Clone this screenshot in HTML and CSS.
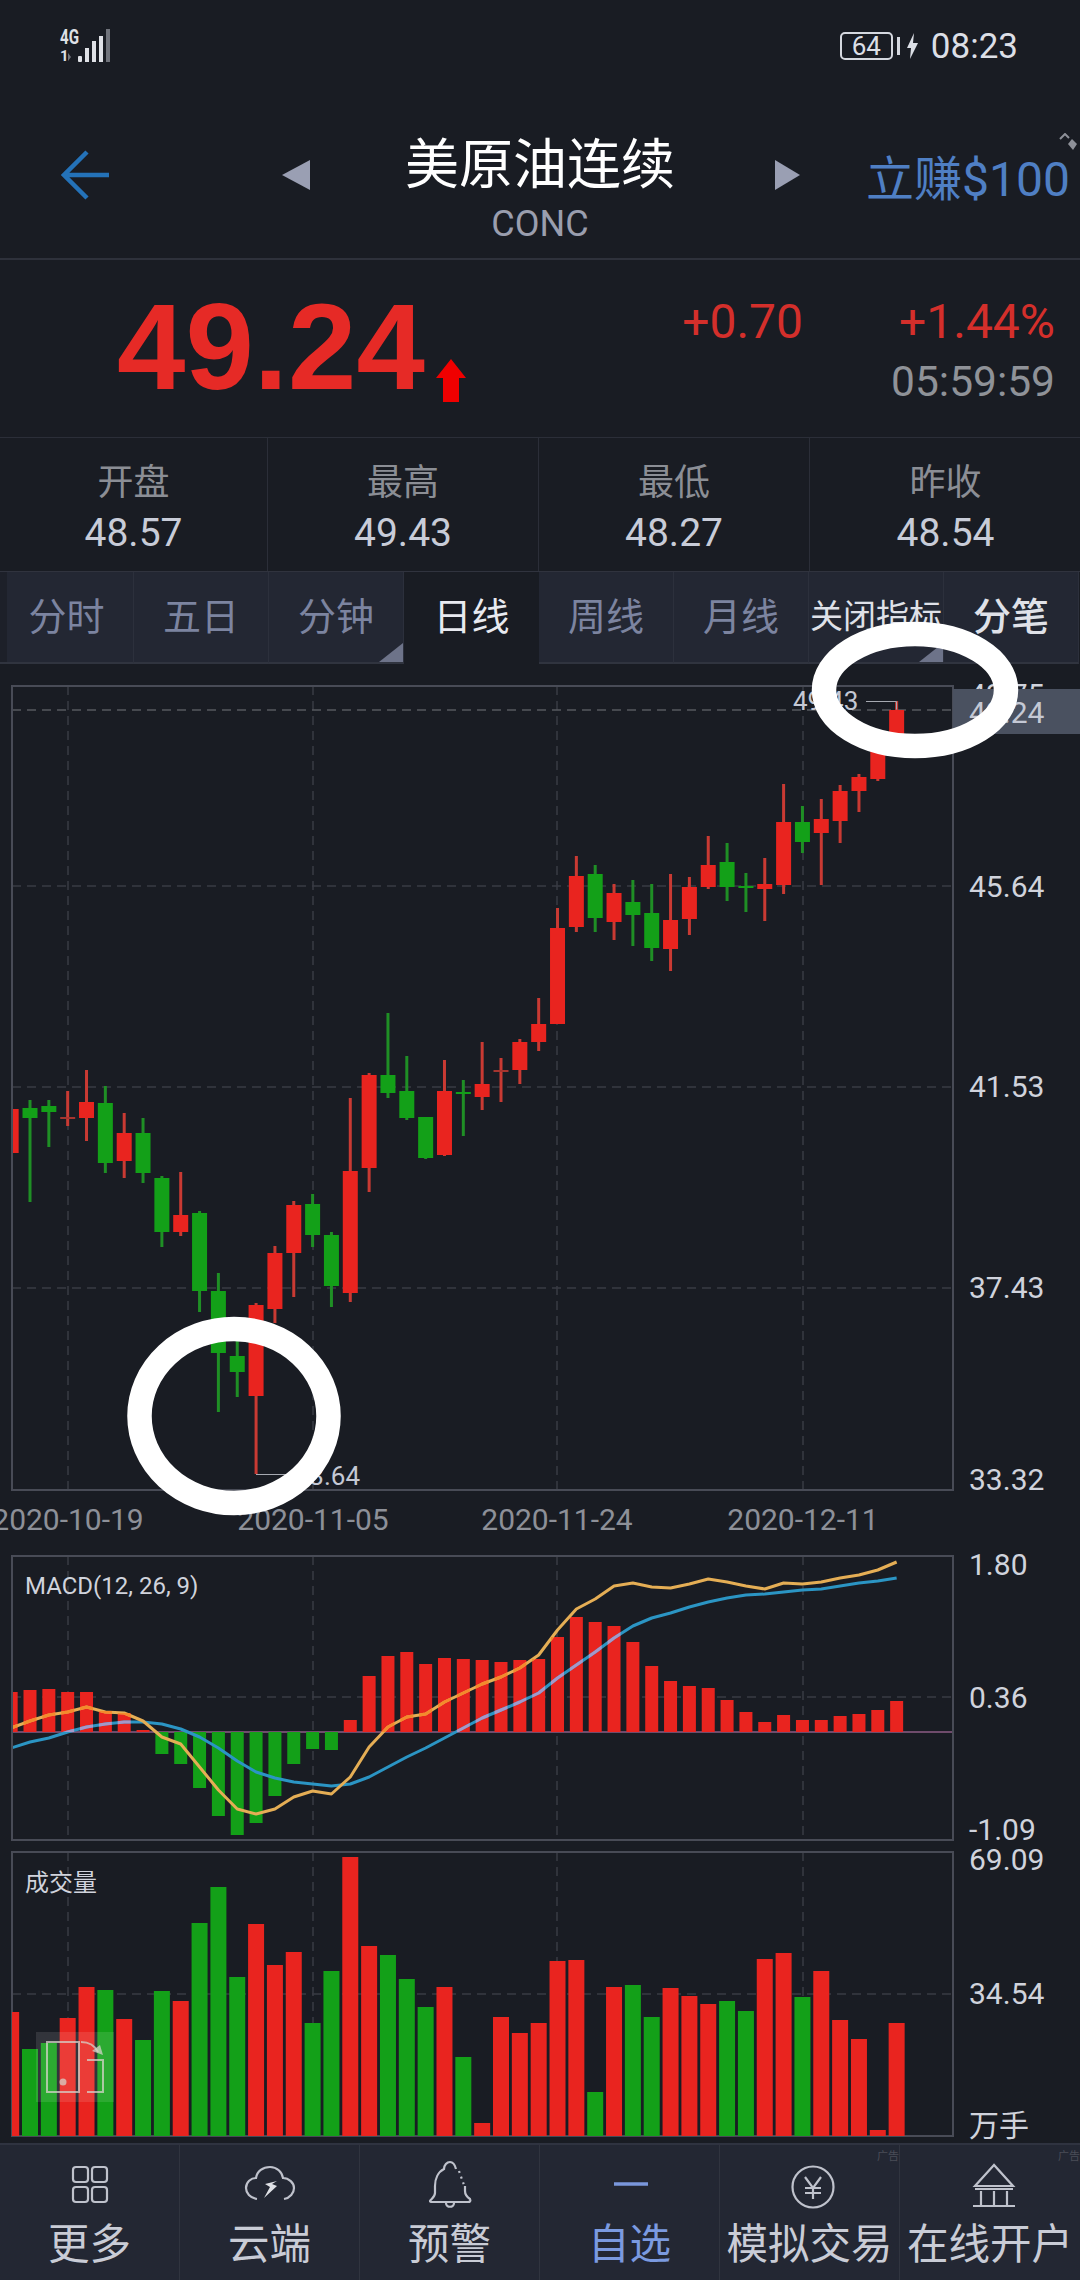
FILE: index.html
```html
<!DOCTYPE html>
<html lang="zh-CN">

<head>
    <meta charset="UTF-8">
    <meta name="viewport" content="width=device-width, initial-scale=1.0">
    <title>美原油连续</title>
    <link rel="stylesheet" href="styles.css">
</head>

<body>
    <div class="page">
        <div class="status-bar">
            <svg class="signal" width="52" height="46" viewBox="0 -6 52 46">
                <text class="signal-text" x="1" y="15" textLength="19" lengthAdjust="spacingAndGlyphs">4G</text>
                <text class="signal-small" x="1" y="32">1</text>
                <path class="signal-dim" d="M9 24l3 4-3 4z" />
                <rect class="signal-bar" x="19" y="27" width="4" height="6" rx="1" />
                <rect class="signal-bar" x="26" y="19" width="4" height="14" />
                <rect class="signal-bar" x="33" y="12" width="4" height="21" />
                <rect class="signal-bar" x="40" y="7" width="4" height="26" />
                <rect class="signal-dim" x="47" y="0" width="4" height="33" />
            </svg>
            <div class="status-right">
                <span class="battery">64</span>
                <span class="battery-nub"></span>
                <svg class="bolt" width="11" height="26" viewBox="0 0 11 26">
                    <path d="M7 0L0 15h4l-1 11 8-16H6z" />
                </svg>
                <span class="clock">08:23</span>
            </div>
        </div>

        <div class="nav">
            <svg class="back" width="48" height="50" viewBox="0 0 48 50">
                <path d="M48 25H5M26 2L3 25l23 23" />
            </svg>
            <svg class="tri" width="28" height="30" viewBox="0 0 28 30"><path d="M28 0v30L0 15z" /></svg>
            <div class="nav-title">
                <div class="title">美原油连续</div>
                <div class="code">CONC</div>
            </div>
            <svg class="tri tri-right" width="25" height="30" viewBox="0 0 25 30"><path d="M0 0v30l25-15z" /></svg>
            <div class="earn">立赚$100</div>
            <svg class="corner-mark" width="20" height="18" viewBox="0 0 20 18">
                <path class="corner-line" d="M1 6l5-5 4 4" />
                <path class="corner-fill" d="M13 6l5 5-4 6-5-6z" />
            </svg>
        </div>

        <div class="quote">
            <div class="price">49.24</div>
            <svg class="up-arrow" width="30" height="43" viewBox="0 0 30 43">
                <path d="M15 0l15 19H23v24H7V19H0z" />
            </svg>
            <div class="quote-side">
                <div class="change-row">
                    <span>+0.70</span>
                    <span>+1.44%</span>
                </div>
                <div class="quote-time">05:59:59</div>
            </div>
        </div>

        <div class="stats">
            <div class="stat">
                <div class="stat-label">开盘</div>
                <div class="stat-value">48.57</div>
            </div>
            <div class="stat">
                <div class="stat-label">最高</div>
                <div class="stat-value">49.43</div>
            </div>
            <div class="stat">
                <div class="stat-label">最低</div>
                <div class="stat-value">48.27</div>
            </div>
            <div class="stat">
                <div class="stat-label">昨收</div>
                <div class="stat-value">48.54</div>
            </div>
        </div>

        <div class="tabs">
            <div class="tab">分时</div>
            <div class="tab">五日</div>
            <div class="tab has-corner">分钟</div>
            <div class="tab active">日线</div>
            <div class="tab">周线</div>
            <div class="tab">月线</div>
            <div class="tab tab-small has-corner">关闭指标</div>
            <div class="tab tab-strong">分笔</div>
        </div>

        <svg id="chart" class="chart" width="1080" height="1483" viewBox="0 660 1080 1483"></svg>

        <div class="bottom-nav">
            <div class="nav-item">
                <svg class="nav-icon" width="60" height="50" viewBox="0 0 60 50">
                    <rect x="13" y="7" width="15" height="15" rx="3" />
                    <rect x="32" y="7" width="15" height="15" rx="3" />
                    <rect x="13" y="27" width="15" height="15" rx="3" />
                    <rect x="32" y="27" width="15" height="15" rx="3" />
                </svg>
                <div class="nav-label">更多</div>
            </div>
            <div class="nav-item">
                <svg class="nav-icon" width="60" height="50" viewBox="0 0 60 50">
                    <path d="M17 39C10 38 6 33 6 28c0-6 5-10 10-10 1-7 7-11 14-11s12 5 13 11c6 0 11 5 11 10 0 5-4 10-10 11" />
                    <path class="icon-fill" d="M37 21l-12 3 5 3-6 11 13-12-5-2z" />
                </svg>
                <div class="nav-label">云端</div>
            </div>
            <div class="nav-item">
                <svg class="nav-icon" width="60" height="50" viewBox="0 0 60 50">
                    <path d="M36 9c-1-4-3-7-6-7s-6 3-6 7c-6 3-9 10-9 17v7c0 4-4 6-5 8 0 1 1 1 2 1h36c2 0 3-1 2-3-3-2-5-4-5-8V26" />
                    <path d="M26 43c0 5 8 5 8 0" />
                    <path class="icon-dots" d="M39 11l5 14" />
                </svg>
                <div class="nav-label">预警</div>
            </div>
            <div class="nav-item nav-active">
                <svg class="nav-icon" width="60" height="50" viewBox="0 0 60 50">
                    <path class="minus" d="M14 24h34" />
                </svg>
                <div class="nav-label">自选</div>
            </div>
            <div class="nav-item">
                <svg class="nav-icon" width="60" height="50" viewBox="0 0 60 50">
                    <circle cx="33" cy="27" r="20.5" />
                    <path d="M25 17l8 11 8-11M33 28v11M25 28h16M25 33h16" />
                </svg>
                <div class="nav-label">模拟交易</div>
                <span class="ad-tag">广告</span>
            </div>
            <div class="nav-item">
                <svg class="nav-icon" width="60" height="50" viewBox="0 0 60 50">
                    <path d="M34 5L15 26h38zM15 29h38M21 31v14M34 31v14M47 31v14M13 46h42" />
                </svg>
                <div class="nav-label">在线开户</div>
                <span class="ad-tag">广告</span>
            </div>
        </div>

        <svg class="marks" width="1080" height="2280" viewBox="0 0 1080 2280">
            <ellipse cx="915" cy="690" rx="91" ry="56" />
            <ellipse cx="234" cy="1416" rx="94.5" ry="87" />
        </svg>

        <div class="float-btn">
            <svg width="78" height="70" viewBox="36 2032 78 70">
                <rect class="float-line" x="47" y="2042" width="32" height="50" />
                <circle class="float-dot" cx="63" cy="2082" r="3.5" />
                <path class="float-line" d="M81 2042c8 0 14 4 17 10M87 2060h16v32H87" />
                <path class="float-dot" d="M103 2055l-11-4 8-6z" />
            </svg>
        </div>
    </div>

    <script src="chart.js"></script>
</body>

</html>
```

FILE: styles.css
```css
* {
    box-sizing: border-box;
}

body {
    margin: 0;
    background-color: #191c23;
    font-family: Roboto, "Noto Sans CJK SC", sans-serif;
}

.page {
    position: relative;
    width: 1080px;
    height: 2280px;
    overflow: hidden;
    background-color: #191c23;
}

/* status bar */
.status-bar {
    display: flex;
    justify-content: space-between;
    align-items: center;
    height: 92px;
    padding: 0 62px 0 59px;
}

.signal-text {
    font-size: 21px;
    font-weight: 700;
    fill: #dfe1e6;
}

.signal-small {
    font-size: 15px;
    font-weight: 700;
    fill: #dfe1e6;
}

.signal-bar {
    fill: #dfe1e6;
}

.signal-dim {
    fill: #70737b;
}

.status-right {
    display: flex;
    align-items: center;
    color: #dcdfe6;
}

.battery {
    width: 53px;
    height: 28px;
    border: 2px solid #d5d8df;
    border-radius: 5px;
    font-size: 26px;
    line-height: 24px;
    text-align: center;
}

.battery-nub {
    width: 3px;
    height: 18px;
    margin-left: 4px;
    background-color: #d5d8df;
}

.bolt {
    margin-left: 7px;
    fill: #dcdfe6;
}

.clock {
    margin-left: 13px;
    font-size: 35px;
}

/* title row */
.nav {
    position: relative;
    display: grid;
    grid-template-columns: 282px 28px 460px 30px 280px;
    align-items: center;
    height: 168px;
    border-bottom: 2px solid #2e313b;
}

.back {
    margin-left: 61px;
    fill: none;
    stroke: #2472b8;
    stroke-width: 4.5;
}

.tri {
    fill: #9a9fb3;
}

.tri-right {
    margin-left: 5px;
}

.nav-title {
    align-self: start;
    padding-top: 44px;
    text-align: center;
}

.title {
    font-size: 54px;
    line-height: 60px;
    color: #fff;
}

.code {
    margin-top: 8px;
    font-size: 36px;
    line-height: 40px;
    color: #9a9eae;
}

.earn {
    margin-left: 66px;
    font-size: 48px;
    white-space: nowrap;
    color: #4f7fc4;
}

.corner-mark {
    position: absolute;
    top: 41px;
    right: 1px;
}

.corner-line {
    fill: none;
    stroke: #8d9098;
    stroke-width: 2;
}

.corner-fill {
    fill: #8d9098;
}

/* last price */
.quote {
    display: flex;
    height: 178px;
    padding-left: 117px;
    border-bottom: 1px solid #2b2e38;
}

.price {
    font-family: "Liberation Sans", Arial, sans-serif;
    font-size: 123px;
    font-weight: 700;
    line-height: 174px;
    color: #e62a26;
}

.up-arrow {
    align-self: flex-end;
    margin: 0 0 35px 11px;
    fill: #f00000;
}

.quote-side {
    display: flex;
    flex-direction: column;
    align-items: flex-end;
    row-gap: 6px;
    margin-left: auto;
    padding: 35px 25px 0 0;
}

.change-row {
    display: flex;
    column-gap: 96px;
    font-size: 48px;
    line-height: 54px;
    color: #d42f2b;
}

.quote-time {
    font-size: 42.5px;
    line-height: 54px;
    color: #8f9298;
}

/* open / high / low / close */
.stats {
    display: grid;
    grid-template-columns: 268px repeat(3, 271px);
    height: 133px;
}

.stat {
    padding-top: 20px;
    border-right: 1px solid #2b2e38;
    text-align: center;
}

.stat:last-child {
    border-right: 0;
}

.stat-label {
    font-size: 36px;
    line-height: 50px;
    color: #8b8e95;
}

.stat-value {
    font-size: 39px;
    line-height: 50px;
    color: #c8ccd8;
}

/* period tabs */
.tabs {
    display: grid;
    grid-template-columns: 134px repeat(7, 135px);
    height: 89px;
    border-top: 1px solid #30333e;
}

.tab {
    position: relative;
    border-right: 1px solid #2c303c;
    border-bottom: 2px solid #30343f;
    background-color: #232733;
    font-size: 38px;
    line-height: 90px;
    text-align: center;
    color: #7c84a0;
}

.tab:first-child {
    background: linear-gradient(90deg, #1d2029 7px, #232733 7px);
}

.tab.active {
    border: 0;
    background-color: #191c23;
    color: #e8eaf0;
}

.tab-small {
    font-size: 33px;
    color: #dfe1e8;
}

.tab-strong {
    font-weight: 500;
    color: #dfe1e8;
}

.has-corner::after {
    content: "";
    position: absolute;
    right: 0;
    bottom: 0;
    width: 24px;
    height: 19px;
    background-color: #6d7389;
    clip-path: polygon(100% 0, 100% 100%, 0 100%);
}

/* chart */
.chart {
    display: block;
}

.frame {
    fill: none;
    stroke: #484b56;
    stroke-width: 2;
}

.grid-line {
    stroke: #383b44;
    stroke-width: 1.5;
    stroke-dasharray: 9 6;
}

.grid-line.current {
    stroke: #55585f;
}

.zero-line {
    stroke: #6f4c6c;
    stroke-width: 2;
}

.up {
    fill: #e9241f;
}

.down {
    fill: #13a018;
}

.wick-up {
    fill: #c93a33;
}

.wick-down {
    fill: #1f8f25;
}

.doji-up {
    fill: #a5352f;
}

.macd-line {
    fill: none;
    stroke-width: 3;
    stroke-linejoin: round;
}

.line-dif {
    stroke: #e5ae55;
}

.line-dif-over {
    stroke: #f48a2c;
}

.line-dea {
    stroke: #2b95c4;
}

.line-dea-over {
    stroke: #a598c8;
}

.axis-label {
    font-size: 30px;
    fill: #d0d3dc;
}

.date-label {
    font-size: 30px;
    fill: #8d9098;
    text-anchor: middle;
}

.panel-title {
    font-size: 24px;
    fill: #d0d3dc;
}

.peak-label {
    font-size: 26px;
    fill: #c4c8d4;
}

.peak-line {
    fill: none;
    stroke: #a6a9b1;
    stroke-width: 1;
}

.price-tag {
    fill: #4a5160;
}

.price-tag-text {
    font-size: 30px;
    fill: #c4c8d4;
}

/* bottom bar */
.bottom-nav {
    display: grid;
    grid-template-columns: repeat(6, 1fr);
    height: 137px;
    border-top: 2px solid #2f3340;
    background-color: #232733;
}

.nav-item {
    position: relative;
    display: flex;
    flex-direction: column;
    align-items: center;
    padding-top: 15px;
    border-right: 1px solid #30343f;
}

.nav-item:last-child {
    border-right: 0;
}

.nav-icon {
    fill: none;
    stroke: #bfc2cc;
    stroke-width: 2.2;
}

.icon-fill {
    fill: #dfe1e6;
    stroke: none;
}

.icon-dots {
    stroke-dasharray: 2 4;
}

.minus {
    stroke: #7a97dc;
    stroke-width: 3.5;
}

.nav-label {
    margin-top: 7px;
    font-size: 41.5px;
    line-height: 56px;
    white-space: nowrap;
    color: #c9ccd6;
}

.nav-active .nav-label {
    color: #7b9ae0;
}

.ad-tag {
    position: absolute;
    top: 5px;
    right: 0;
    font-size: 11px;
    line-height: 14px;
    color: #4a4d57;
}

/* things lying over the page */
.marks {
    position: absolute;
    top: 0;
    left: 0;
    fill: none;
    stroke: #fff;
    stroke-width: 24.5;
}

.float-btn {
    position: absolute;
    top: 2032px;
    left: 36px;
    width: 78px;
    height: 70px;
    background-color: rgba(255, 255, 255, 0.11);
}

.float-btn svg {
    display: block;
}

.float-line {
    fill: none;
    stroke: rgba(214, 210, 202, 0.75);
    stroke-width: 2;
}

.float-dot {
    fill: rgba(214, 210, 202, 0.75);
}
```

FILE: chart.js
```js
const svgNS = "http://www.w3.org/2000/svg";
const chart = document.getElementById("chart");

const frameLeft = 12, frameRight = 953;

// each candle: [colour, body top, body bottom, wick top, wick bottom]
const candles = [
    ["u", 1109, 1153, 1109, 1153], ["d", 1108, 1118, 1100, 1202], ["d", 1106, 1112, 1100, 1147],
    ["j", 1117, 1119, 1091, 1126], ["u", 1102, 1118, 1070, 1141], ["d", 1103, 1163, 1086, 1173],
    ["u", 1133, 1161, 1113, 1178], ["d", 1133, 1173, 1118, 1183], ["d", 1178, 1232, 1176, 1247],
    ["u", 1215, 1232, 1172, 1236], ["d", 1213, 1291, 1211, 1312], ["d", 1291, 1353, 1273, 1412],
    ["d", 1356, 1372, 1340, 1397], ["u", 1305, 1396, 1303, 1474], ["u", 1253, 1309, 1246, 1323],
    ["u", 1205, 1253, 1201, 1297], ["d", 1204, 1235, 1194, 1247], ["d", 1235, 1286, 1232, 1307],
    ["u", 1171, 1293, 1098, 1302], ["u", 1075, 1168, 1073, 1192], ["d", 1075, 1093, 1013, 1098],
    ["d", 1091, 1118, 1056, 1120], ["d", 1117, 1158, 1117, 1159], ["u", 1091, 1155, 1060, 1156],
    ["d", 1092, 1094, 1080, 1136], ["u", 1084, 1097, 1042, 1110], ["j", 1070, 1072, 1058, 1102],
    ["u", 1042, 1070, 1039, 1084], ["u", 1024, 1042, 998, 1051], ["u", 928, 1024, 908, 1024],
    ["u", 876, 927, 856, 932], ["d", 874, 918, 865, 932], ["u", 893, 922, 884, 940],
    ["d", 902, 915, 880, 946], ["d", 913, 948, 884, 961], ["u", 920, 949, 874, 971],
    ["u", 887, 919, 877, 935], ["u", 865, 887, 836, 889], ["d", 862, 887, 843, 901],
    ["d", 886, 888, 873, 912], ["u", 884, 889, 858, 921], ["u", 822, 885, 784, 894],
    ["d", 822, 842, 806, 853], ["u", 819, 833, 799, 885], ["u", 791, 821, 785, 843],
    ["u", 777, 791, 774, 812], ["u", 748, 779, 745, 781], ["u", 710, 745, 701, 745]
];

const macdBars = [
    1692, 1690, 1689, 1692, 1692, 1711, 1713, 1730, 1754, 1764, 1788, 1816,
    1835, 1823, 1796, 1764, 1749, 1750, 1720, 1676, 1656, 1652, 1664, 1658,
    1659, 1660, 1662, 1660, 1659, 1637, 1617, 1622, 1626, 1642, 1666, 1681,
    1686, 1688, 1700, 1712, 1722, 1715, 1720, 1720, 1716, 1714, 1710, 1701
];

const difLine = [
    1728, 1721, 1715, 1712, 1707, 1712, 1713, 1721, 1737, 1744, 1767, 1790,
    1809, 1814, 1809, 1797, 1791, 1794, 1777, 1747, 1727, 1717, 1714, 1702,
    1693, 1684, 1677, 1668, 1655, 1630, 1609, 1599, 1586, 1583, 1587, 1588,
    1584, 1579, 1582, 1586, 1589, 1583, 1584, 1582, 1578, 1575, 1570, 1562
];

const deaLine = [
    1748, 1742, 1738, 1732, 1727, 1724, 1722, 1722, 1724, 1729, 1737, 1748,
    1761, 1772, 1778, 1782, 1784, 1786, 1784, 1777, 1767, 1757, 1748, 1738,
    1728, 1718, 1710, 1702, 1693, 1678, 1665, 1652, 1638, 1626, 1618, 1613,
    1607, 1602, 1598, 1595, 1594, 1592, 1590, 1589, 1586, 1583, 1581, 1578
];

// volume: [colour, bar top]
const volumes = [
    ["u", 2012], ["d", 2049], ["d", 2043], ["u", 2018], ["u", 1987], ["d", 1990],
    ["u", 2019], ["d", 2040], ["d", 1991], ["u", 2001], ["d", 1923], ["d", 1887],
    ["d", 1977], ["u", 1924], ["u", 1965], ["u", 1952], ["d", 2023], ["d", 1971],
    ["u", 1857], ["u", 1946], ["d", 1955], ["d", 1979], ["d", 2007], ["u", 1987],
    ["d", 2057], ["u", 2123], ["u", 2017], ["u", 2033], ["u", 2023], ["u", 1961],
    ["u", 1960], ["d", 2092], ["u", 1987], ["d", 1985], ["d", 2017], ["u", 1988],
    ["u", 1996], ["u", 2004], ["d", 2001], ["d", 2011], ["u", 1959], ["u", 1953],
    ["d", 1997], ["u", 1971], ["u", 2020], ["u", 2039], ["u", 2130], ["u", 2023]
];

function add(tag, attrs, parent, text) {
    const node = document.createElementNS(svgNS, tag);
    for (const key in attrs) {
        node.setAttribute(key, attrs[key]);
    }
    if (text) {
        node.textContent = text;
    }
    (parent || chart).appendChild(node);
    return node;
}

function candleX(i) {
    return 11.16 + 18.84 * i;
}

function box(centerX, top, bottom, width, cls, parent) {
    add("rect", { x: centerX - width / 2, y: top, width: width, height: bottom - top, class: cls }, parent);
}

function panelGrid(top, bottom, dashed) {
    [68, 313, 557, 803].forEach((x) => {
        add("line", { x1: x, x2: x, y1: top, y2: bottom, class: "grid-line" });
    });
    dashed.forEach((y) => {
        add("line", { x1: frameLeft, x2: frameRight, y1: y, y2: y, class: "grid-line" });
    });
}

function axisLabel(text, centerY) {
    add("text", { x: 969, y: centerY + 10.5, class: "axis-label" }, null, text);
}

const defs = add("defs", {});
const plotClip = add("clipPath", { id: "plot-clip" }, defs);
add("rect", { x: frameLeft, y: 660, width: frameRight - frameLeft, height: 1483 }, plotClip);
const redClip = add("clipPath", { id: "macd-red" }, defs);

// candle panel
panelGrid(686, 1490, [886, 1087, 1288]);
add("line", { x1: frameLeft, x2: frameRight, y1: 710, y2: 710, class: "grid-line current" });

const plot = add("g", { "clip-path": "url(#plot-clip)" });
candles.forEach((c, i) => {
    const x = candleX(i);
    const wick = c[0] === "d" ? "wick-down" : "wick-up";
    box(x, c[3], c[4], 3, wick, plot);
    box(x, c[1], c[2], 15, c[0] === "u" ? "up" : c[0] === "d" ? "down" : "doji-up", plot);
});

add("path", { d: "M866 701.5h30.5v8", class: "peak-line" });
add("text", { x: 793, y: 710, class: "peak-label" }, null, "49.43");
add("path", { d: "M256 1474.5h50", class: "peak-line" });
add("text", { x: 360, y: 1485, class: "peak-label", "text-anchor": "end" }, null, "33.64");
add("rect", { x: frameLeft, y: 686, width: frameRight - frameLeft, height: 804, class: "frame" });

axisLabel("49.75", 694);
add("rect", { x: 953, y: 689, width: 127, height: 45, class: "price-tag" });
add("text", { x: 969, y: 722.5, class: "price-tag-text" }, null, "49.24");
axisLabel("45.64", 886);
axisLabel("41.53", 1086);
axisLabel("37.43", 1287);
axisLabel("33.32", 1479);

[[68, "2020-10-19"], [313, "2020-11-05"], [557, "2020-11-24"], [803, "2020-12-11"]].forEach((d) => {
    add("text", { x: d[0], y: 1530, class: "date-label" }, null, d[1]);
});

// MACD panel
const macdBase = 1732;
panelGrid(1556, 1840, [1697]);
add("line", { x1: frameLeft, x2: frameRight, y1: macdBase, y2: macdBase, class: "zero-line" });

const macd = add("g", { "clip-path": "url(#plot-clip)" });
macdBars.forEach((y, i) => {
    const x = candleX(i);
    if (y < macdBase) {
        box(x, y, macdBase, 13, "up", macd);
        box(x, y, macdBase, 13, "", redClip);
    } else {
        box(x, macdBase, y, 13, "down", macd);
    }
});

function macdLine(values, cls, overCls) {
    const points = values.map((y, i) => candleX(i) + "," + y).join(" ");
    add("polyline", { points: points, class: "macd-line " + cls }, macd);
    const over = add("g", { "clip-path": "url(#macd-red)" }, macd);
    add("polyline", { points: points, class: "macd-line " + overCls }, over);
}

macdLine(deaLine, "line-dea", "line-dea-over");
macdLine(difLine, "line-dif", "line-dif-over");

add("rect", { x: frameLeft, y: 1556, width: frameRight - frameLeft, height: 284, class: "frame" });
add("text", { x: 25, y: 1594, class: "panel-title" }, null, "MACD(12, 26, 9)");
axisLabel("1.80", 1564);
axisLabel("0.36", 1697);
axisLabel("-1.09", 1829);

// volume panel
panelGrid(1852, 2136, [1994]);
add("rect", { x: frameLeft, y: 1852, width: frameRight - frameLeft, height: 284, class: "frame" });

const volume = add("g", { "clip-path": "url(#plot-clip)" });
volumes.forEach((v, i) => {
    box(candleX(i), v[1], 2136, 16, v[0] === "u" ? "up" : "down", volume);
});

add("text", { x: 25, y: 1891, class: "panel-title" }, null, "成交量");
axisLabel("69.09", 1859);
axisLabel("34.54", 1993);
add("text", { x: 969, y: 2136, class: "axis-label" }, null, "万手");
```
